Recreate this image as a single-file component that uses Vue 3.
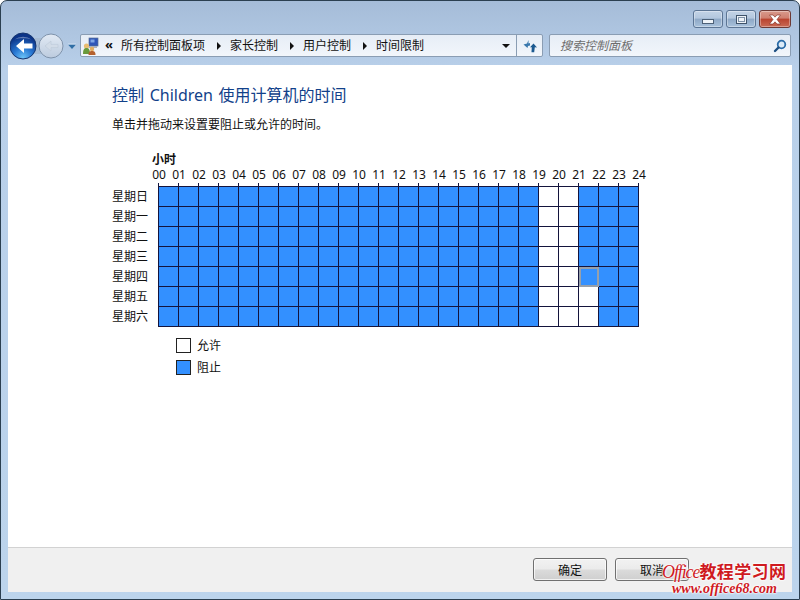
<template>
  <div class="win">
    <div class="caption">
      <button class="wbtn wbtn--min"><i class="glyph-min"></i></button>
      <button class="wbtn wbtn--max"><i class="glyph-max"></i></button>
      <button class="wbtn wbtn--close">
        <svg width="16" height="11" viewBox="0 0 16 11"><path d="M2.500 1h3.500l2 2.200L10 1h3.500L10 5.500l3.500 4.500H10L8 7.800 6 10H2.500L6 5.500z" fill="#fff" stroke="#7b2a20" stroke-width=".6"/></svg>
      </button>
    </div>

    <div class="nav">
      <div class="nav__arrows">
        <svg width="70" height="32" viewBox="0 0 70 32">
          <defs>
            <radialGradient id="bk" cx="50%" cy="95%" r="80%">
              <stop offset="0" stop-color="#6cc4f8"/>
              <stop offset=".45" stop-color="#2a7ad4"/>
              <stop offset="1" stop-color="#0c3488"/>
            </radialGradient>
            <linearGradient id="fw" x1="0" y1="0" x2="0" y2="1">
              <stop offset="0" stop-color="#e2eaf4"/>
              <stop offset="1" stop-color="#bccbde"/>
            </linearGradient>
          </defs>
          <rect x="20" y="8" width="16" height="16" fill="#a8bcd3"/>
          <circle cx="41" cy="16" r="12" fill="url(#fw)" stroke="#7f93ab"/>
          <path d="M48 14.400h-7v-3.400l-6 5 6 5v-3.400h7z" fill="#d2dce8" stroke="#bcc9d8" stroke-width=".6"/>
          <circle cx="13" cy="16" r="13" fill="url(#bk)" stroke="#16356f"/>
          <path d="M4.500 9.500a12 9 0 0 1 17 0c-4-1.800-13-1.800-17 0z" fill="#fff" opacity=".35"/>
          <path d="M22.500 13.500h-8.500V9L6 16l8 7v-4.500h8.500z" fill="#fff"/>
          <path d="M58 14.500h8l-4 4.500z" fill="#2f6ea5"/>
          <path d="M58 14h8" stroke="#cfe0f0" stroke-width="1"/>
        </svg>
      </div>
      <div class="addr">
        <svg class="addr__icon" width="17" height="18" viewBox="0 0 17 18">
          <rect x="7" y="1" width="9" height="8" fill="#2f56b8" stroke="#5b6f93" stroke-width=".7"/>
          <rect x="8.500" y="2.500" width="4" height="3" fill="#7fa6e6"/>
          <rect x="7" y="9" width="8" height="2" fill="#a9b2bf"/>
          <circle cx="4.500" cy="9" r="2.600" fill="#e8bd72"/>
          <path d="M1 17c0-5 1.500-6 3.500-6S8 12 8 17z" fill="#6a9a3c"/>
          <circle cx="10" cy="12" r="2.200" fill="#e3ad62"/>
          <path d="M6.500 18c0-3.500 1.500-4 3.500-4s3.500.5 3.500 4z" fill="#b5622f"/>
        </svg>
        <span class="addr__more">«</span>
        <span class="crumb">所有控制面板项</span><i class="sep"></i>
        <span class="crumb">家长控制</span><i class="sep"></i>
        <span class="crumb">用户控制</span><i class="sep"></i>
        <span class="crumb">时间限制</span>
        <i class="addr__drop"></i>
        <div class="addr__refresh">
          <svg width="16" height="14" viewBox="0 0 16 14">
            <path d="M6.500 1v3.500L8 4v2.500L6 7 5.500 9 1.500 5.500 5 4.500z" fill="#3a78ad"/>
            <path d="M11.500 4.500 15 8.500l-2.200-.3-.6 5H9.500c0-2 .5-3.500 0-5.200L7.800 8.500z" fill="#1c5a90"/>
          </svg>
        </div>
      </div>
      <div class="search">
        <span class="search__ph">搜索控制面板</span>
        <svg width="14" height="14" viewBox="0 0 14 14">
          <circle cx="8.500" cy="5.500" r="3.800" fill="#dcebf8" stroke="#2b6ca8" stroke-width="1.800"/>
          <path d="M5.500 8.500 2 12" stroke="#1d4f82" stroke-width="2.400" stroke-linecap="round"/>
        </svg>
      </div>
    </div>

    <div class="body">
      <div class="page">
        <h1 class="title">控制 Children 使用计算机的时间</h1>
        <p class="hint">单击并拖动来设置要阻止或允许的时间。</p>
        <div class="hours-head">小时</div>
        <div class="hours">
          <div v-for="h in hourLabels" :key="h" class="hour">{{ h }}</div>
        </div>
        <div class="sched">
          <div class="days">
            <div v-for="d in days" :key="d" class="day">{{ d }}</div>
          </div>
          <div class="grid">
            <template v-for="(d, r) in days" :key="d">
              <div
                v-for="c in 24"
                :key="c"
                class="cell"
                :class="{ 'cell--free': isFree(r, c - 1), 'cell--focus': r === 4 && c - 1 === 21 }"
              ></div>
            </template>
          </div>
        </div>
        <div class="legend">
          <div class="legend__row"><i class="swatch"></i>允许</div>
          <div class="legend__row"><i class="swatch swatch--blocked"></i>阻止</div>
        </div>
      </div>
      <div class="foot">
        <button class="btn">确定</button>
        <button class="btn">取消</button>
      </div>
    </div>

    <div class="mark">
      <div class="mark__top"><span class="mark__en">Office</span>教程学习网</div>
      <div class="mark__url">www.office68.com</div>
    </div>
  </div>
</template>

<script setup>
const days = ['星期日', '星期一', '星期二', '星期三', '星期四', '星期五', '星期六']
const hourLabels = Array.from({ length: 25 }, (_, i) => String(i).padStart(2, '0'))

function isFree(row, col) {
  if (col === 19 || col === 20) return true
  return col === 21 && row >= 5
}
</script>

<style>
html, body { margin: 0; background: #fff; overflow: hidden; }
</style>

<style scoped>
.win {
  position: relative;
  box-sizing: border-box;
  width: 800px;
  height: 600px;
  display: flex;
  flex-direction: column;
  padding: 0 7px 7px;
  border: 1px solid #2b3f50;
  border-radius: 7px 7px 0 0;
  background: linear-gradient(#a5bcd8 0, #b9d0ea 70px, #bcd4ec 100%);
  font-family: "Noto Sans", "Noto Sans CJK SC", sans-serif;
  font-size: 12px;
  color: #111;
  overflow: hidden;
}

.caption {
  display: flex;
  justify-content: flex-end;
  gap: 3px;
  height: 26px;
  padding-top: 9px;
  box-sizing: border-box;
  margin-right: 1px;
}
.wbtn {
  width: 30px;
  height: 18px;
  padding: 0;
  display: flex;
  align-items: center;
  justify-content: center;
  border: 1px solid #5c7594;
  border-radius: 3px;
  background: linear-gradient(#c3d3e6 0, #b3c7de 45%, #8ea8c6 50%, #a9c2dc 100%);
  box-shadow: inset 0 0 0 1px rgba(255, 255, 255, .35);
}
.wbtn--close {
  width: 32px;
  border-color: #6d3a36;
  background: linear-gradient(#d89a8c 0, #cf7f6f 45%, #b9432f 50%, #c96a55 100%);
}
.glyph-min {
  display: block;
  width: 10px;
  height: 3px;
  margin-top: 5px;
  background: #eef3f8;
  border: 1px solid #4d6178;
}
.glyph-max {
  display: block;
  box-sizing: border-box;
  width: 11px;
  height: 9px;
  background: #eef3f8;
  border: 1px solid #3f536a;
  box-shadow: inset 0 0 0 1px #eef3f8, inset 0 0 0 2px #7e91a7;
}

.nav {
  display: flex;
  align-items: center;
  height: 38px;
  padding-bottom: 1px;
  box-sizing: border-box;
}
.nav__arrows {
  width: 70px;
  height: 32px;
  margin-left: 2px;
  flex: none;
}
.addr {
  display: flex;
  align-items: center;
  width: 463px;
  height: 23px;
  box-sizing: border-box;
  flex: none;
  border: 1px solid #8a9db3;
  border-radius: 2px;
  background: linear-gradient(#e6edf6, #f2f6fb);
  padding-left: 1px;
  line-height: 1;
}
.addr__icon { flex: none; }
.addr__more { width: 22px; padding-left: 6px; box-sizing: border-box; font-weight: 700; font-size: 13px; margin-top: -3px; }
.crumb { white-space: nowrap; }
.sep {
  width: 0;
  height: 0;
  margin: 0 9px 0 12px;
  border-left: 4px solid #111;
  border-top: 4px solid transparent;
  border-bottom: 4px solid transparent;
}
.addr__drop {
  margin-left: auto;
  margin-right: 6px;
  border-top: 4px solid #111;
  border-left: 4px solid transparent;
  border-right: 4px solid transparent;
}
.addr__refresh {
  width: 25px;
  height: 100%;
  display: flex;
  align-items: center;
  justify-content: center;
  border-left: 1px solid #8a9db3;
}
.search {
  display: flex;
  align-items: center;
  justify-content: space-between;
  width: 242px;
  height: 23px;
  box-sizing: border-box;
  flex: none;
  margin-left: 6px;
  padding: 0 3px 0 10px;
  border: 1px solid #8a9db3;
  border-radius: 2px;
  background: linear-gradient(#e6edf6, #f2f6fb);
}
.search__ph {
  font-style: italic;
  color: #6d6d6d;
  line-height: 1;
}

.body {
  flex: 1;
  min-height: 0;
  display: flex;
  flex-direction: column;
  background: #fff;
}
.page {
  flex: 1;
  padding: 19px 0 0 104px;
}
.title {
  margin: 0;
  font-size: 16px;
  font-weight: 400;
  line-height: 22px;
  word-spacing: 1.500px;
  color: #12418a;
}
.hint {
  margin: 10px 0 0;
  line-height: 17px;
}
.hours-head {
  margin: 20px 0 0 40px;
  font-weight: 700;
  line-height: 14px;
}
.hours {
  display: flex;
  margin-left: 36px;
  line-height: 14px;
  margin-top: 1px;
}
.hour {
  position: relative;
  box-sizing: border-box;
  width: 20px;
  height: 18px;
  padding-left: 2px;
  text-align: center;
  flex: none;
}
.hour::after {
  content: "";
  position: absolute;
  left: 10px;
  bottom: 0;
  width: 1px;
  height: 3px;
  background: #14143c;
}
.sched { display: flex; }
.days { width: 46px; flex: none; padding-top: 1px; }
.day { height: 20px; line-height: 20px; }
.grid {
  display: grid;
  grid-template-columns: repeat(24, 20px);
  grid-auto-rows: 20px;
  border-top: 1px solid #14143c;
  border-left: 1px solid #14143c;
  width: 480px;
  height: 140px;
}
.cell {
  box-sizing: border-box;
  border-right: 1px solid #14143c;
  border-bottom: 1px solid #14143c;
  background: #3390ff;
}
.cell--free { background: #fff; }
.cell--focus {
  outline: 2px solid #98a0aa;
  outline-offset: -2px;
}
.legend {
  margin: 7px 0 0 64px;
}
.legend__row {
  display: flex;
  align-items: center;
  gap: 6px;
  height: 22px;
}
.swatch {
  display: block;
  box-sizing: border-box;
  width: 15px;
  height: 15px;
  border: 1px solid #222;
  background: #fff;
}
.swatch--blocked { background: #3390ff; }

.foot {
  display: flex;
  gap: 8px;
  height: 45px;
  box-sizing: border-box;
  padding: 10px 0 0 525px;
  background: #f0f0f0;
  border-top: 1px solid #d2d2d2;
}
.btn {
  width: 74px;
  height: 23px;
  padding: 0;
  font: inherit;
  color: #111;
  border: 1px solid #707070;
  border-radius: 3px;
  background: linear-gradient(#f2f2f2 0, #ebebeb 48%, #dbdbdb 52%, #cfcfcf 100%);
  box-shadow: inset 0 0 0 1px rgba(255, 255, 255, .7);
}

.mark {
  position: absolute;
  left: 661px;
  top: 561px;
  color: #cf1a1f;
  font-weight: 700;
  white-space: nowrap;
  text-shadow: 0 0 2px #fff, 0 0 2px #fff, 0 0 3px #fff;
}
.mark__top {
  display: flex;
  align-items: baseline;
  font-size: 17px;
  line-height: 20px;
  letter-spacing: .4px;
}
.mark__en {
  font-family: "Liberation Serif", serif;
  font-style: italic;
  font-weight: 400;
  font-size: 18px;
  letter-spacing: -1.100px;
}
.mark__url {
  margin-left: 10px;
  font-family: "Liberation Serif", serif;
  font-style: italic;
  font-size: 14px;
  line-height: 13px;
}
</style>
